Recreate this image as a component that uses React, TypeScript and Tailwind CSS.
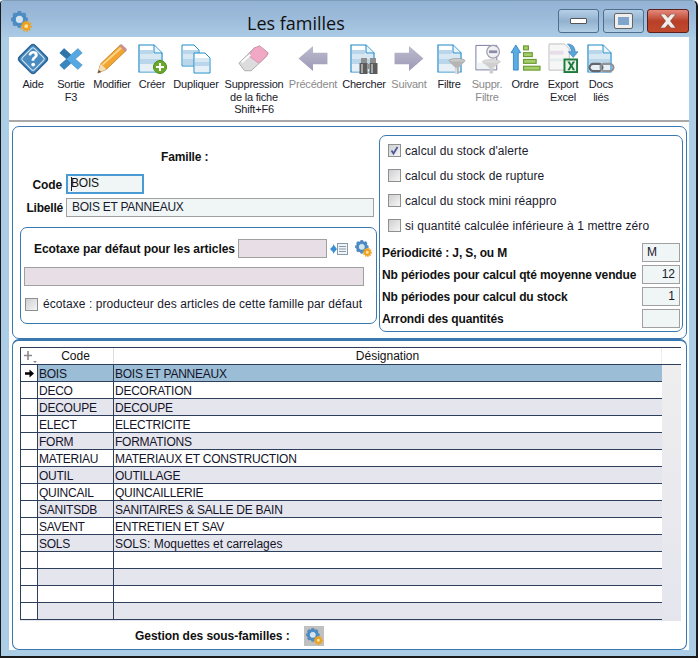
import React from "react";

const rows: [string, string][] = [
  ["BOIS", "BOIS ET PANNEAUX"],
  ["DECO", "DECORATION"],
  ["DECOUPE", "DECOUPE"],
  ["ELECT", "ELECTRICITE"],
  ["FORM", "FORMATIONS"],
  ["MATERIAU", "MATERIAUX ET CONSTRUCTION"],
  ["OUTIL", "OUTILLAGE"],
  ["QUINCAIL", "QUINCAILLERIE"],
  ["SANITSDB", "SANITAIRES & SALLE DE BAIN"],
  ["SAVENT", "ENTRETIEN ET SAV"],
  ["SOLS", "SOLS: Moquettes et carrelages"],
  ["", ""],
  ["", ""],
  ["", ""],
  ["", ""],
];

function Gear({ size = 20 }: { size?: number }) {
  return (
    <svg width={size} height={size} viewBox="0 0 20 20">
      <circle cx="8" cy="8" r="5" fill="#d5e4f1" stroke="#5a9ad0" strokeWidth="3.2" />
      <g fill="#4f90c8" stroke="#3a6ea5" strokeWidth="0.4">
        <circle cx="8" cy="2" r="1.9" />
        <circle cx="8" cy="14" r="1.9" />
        <circle cx="2" cy="8" r="1.9" />
        <circle cx="14" cy="8" r="1.9" />
        <circle cx="3.8" cy="3.8" r="1.9" />
        <circle cx="12.2" cy="3.8" r="1.9" />
        <circle cx="3.8" cy="12.2" r="1.9" />
        <circle cx="12.2" cy="12.2" r="1.9" />
      </g>
      <circle cx="14.5" cy="14.5" r="3" fill="#fbe3a8" stroke="#eda21f" strokeWidth="2.4" />
      <circle cx="14.5" cy="14.5" r="4.8" fill="none" stroke="#eda21f" strokeWidth="1.2" strokeDasharray="1.6 1.3" />
    </svg>
  );
}

function Doc({ children, stroke = "#1d8ac9", w = 24 }: { children?: React.ReactNode; stroke?: string; w?: number }) {
  return (
    <svg width={w + 2} height="29" viewBox={`0 0 ${w + 2} 29`}>
      <path d={`M1 1H${w - 8}L${w} 9V28H1Z`} fill="#fff" stroke={stroke} strokeWidth="1.2" />
      <path d={`M${w - 8} 1V9H${w}`} fill="#eaf3f8" stroke={stroke} strokeWidth="1" />
      <rect x="2" y="6" width={w - 11} height="4" fill="#b9d6ea" />
      <rect x="2" y="10" width={w - 3} height="5" fill="#d8e8f2" />
      <rect x="2" y="15" width={w - 3} height="5" fill="#b9d6ea" />
      <rect x="2" y="20" width={w - 3} height="7.4" fill="#e6f0f6" />
      {children}
    </svg>
  );
}

const icons: Record<string, React.ReactNode> = {
  aide: (
    <svg width="34" height="34" viewBox="0 0 34 34">
      <rect x="6" y="6" width="22" height="22" rx="3" transform="rotate(45 17 17)" fill="#4a8cc0" stroke="#2a6596" strokeWidth="1.5" />
      <rect x="8.5" y="8.5" width="17" height="17" rx="2" transform="rotate(45 17 17)" fill="none" stroke="#d8e8f4" strokeWidth="1" />
      <path d="M12.6 13.2c.4-3 2.4-4.3 4.6-4.3 2.6 0 4.6 1.6 4.6 3.9 0 3.3-3.5 3.1-3.5 6h-2.7c-.1-3.8 3.2-3.8 3.2-5.8 0-1-.7-1.6-1.7-1.6-1.2 0-1.7.8-1.9 2Z" fill="#fff" />
      <circle cx="17.2" cy="22.6" r="1.9" fill="#fff" />
    </svg>
  ),
  sortie: (
    <svg width="26" height="26" viewBox="0 0 30 30">
      <path d="M7 3 15 10 23 3 28 8 20 15 28 22 23 27 15 20 7 27 2 22 10 15 2 8Z" fill="#55a8e2" stroke="#3f86bb" strokeWidth="0.6" />
      <path d="M2 8 7 3 15 10 10 15Z" fill="#2f74a8" />
      <path d="M2 22 7 27 15 20 10 15Z" fill="#3a86bd" />
    </svg>
  ),
  modifier: (
    <svg width="32" height="32" viewBox="0 0 34 34">
      <path d="M2 32 5 22 26 2 32 8 11 28Z" fill="#f2a530" stroke="#b8761a" strokeWidth="0.8" />
      <path d="M7 23 28 4" stroke="#fbd58a" strokeWidth="2" />
      <path d="M25 3 27 1.5 32.5 6.5 31 9Z" fill="#d98a8a" stroke="#999" strokeWidth="0.6" />
      <path d="M2 32 5 22 11 28Z" fill="#f2dfb8" />
      <path d="M2 32 3 28.6 5.4 30.8Z" fill="#444" />
    </svg>
  ),
  creer: (
    <div className="relative w-[29px] h-[30px]">
      <Doc />
      <div className="absolute right-0 bottom-0 w-[14px] h-[14px] rounded-full bg-[#6aa82c] border border-[#4d8a1a] flex items-center justify-center">
        <svg width="10" height="10" viewBox="0 0 10 10"><path d="M4 1H6V4H9V6H6V9H4V6H1V4H4Z" fill="#fff" /></svg>
      </div>
    </div>
  ),
  dupliquer: (
    <svg width="31" height="30" viewBox="0 0 31 30">
      <g stroke="#1d8ac9" strokeWidth="1">
        <path d="M1 1H13L18 6V22H1Z" fill="#fff" />
        <rect x="2" y="6" width="15" height="4" fill="#b9d6ea" stroke="none" />
        <rect x="2" y="10" width="15" height="5" fill="#d8e8f2" stroke="none" />
        <rect x="2" y="15" width="15" height="6" fill="#b9d6ea" stroke="none" />
        <path d="M13 9H24L29 14V29H13Z" fill="#fff" />
        <rect x="14" y="14" width="14" height="4" fill="#d8e8f2" stroke="none" />
        <rect x="14" y="18" width="14" height="4" fill="#b9d6ea" stroke="none" />
        <rect x="14" y="22" width="14" height="6" fill="#e6f0f6" stroke="none" />
      </g>
    </svg>
  ),
  suppression: (
    <svg width="32" height="29" viewBox="0 0 34 30">
      <path d="M1 20 17 4 23 2 32 9 30 13 14 28 7 28Z" fill="#dcdcdc" stroke="#a8a8a8" />
      <path d="M17 4 23 1.5 32 9 30 13 22 20 11 12Z" fill="#f0a8c4" stroke="#c98aa6" strokeWidth="0.7" />
      <path d="M4 19 13 11" stroke="#fff" strokeWidth="2" />
    </svg>
  ),
  prec: (
    <svg width="30" height="27" viewBox="0 0 30 28">
      <defs><linearGradient id="ga" x1="0" y1="0" x2="0" y2="1"><stop offset="0" stopColor="#bcbccd" /><stop offset="1" stopColor="#9d98b8" /></linearGradient></defs>
      <path d="M0 14 15 1V8H30V20H15V27Z" fill="url(#ga)" />
    </svg>
  ),
  chercher: (
    <div className="relative w-[28px] h-[30px]">
      <Doc />
      <svg className="absolute right-0 bottom-0" width="19" height="16" viewBox="0 0 19 16">
        <rect x="2" y="0" width="6" height="5" fill="#8e8e8e" />
        <rect x="11" y="0" width="6" height="5" fill="#8e8e8e" />
        <rect x="0.5" y="5" width="8" height="11" fill="#5c5c5c" />
        <rect x="10.5" y="5" width="8" height="11" fill="#5c5c5c" />
        <rect x="2" y="6" width="2" height="9" fill="#a8a8a8" />
        <rect x="12" y="6" width="2" height="9" fill="#a8a8a8" />
        <rect x="8.5" y="6" width="2" height="5" fill="#8e8e8e" />
      </svg>
    </div>
  ),
  suiv: (
    <svg width="30" height="27" viewBox="0 0 30 28">
      <defs><linearGradient id="gb" x1="0" y1="0" x2="0" y2="1"><stop offset="0" stopColor="#bcbccd" /><stop offset="1" stopColor="#9d98b8" /></linearGradient></defs>
      <path d="M30 14 15 1V8H0V20H15V27Z" fill="url(#gb)" />
    </svg>
  ),
  filtre: (
    <div className="relative w-[29px] h-[30px] ml-[4px]">
      <Doc />
      <svg className="absolute right-0 bottom-0" width="18" height="16" viewBox="0 0 20 18">
        <ellipse cx="10" cy="3" rx="9" ry="2.5" fill="#c9c9c9" stroke="#888" strokeWidth="0.6" />
        <path d="M1 4 8 11V18H12V11L19 4Z" fill="#b5b5b5" />
        <path d="M8 11H10V18H8Z" fill="#dedede" />
      </svg>
    </div>
  ),
  suppr: (
    <svg className="ml-[4px]" width="29" height="30" viewBox="0 0 32 32">
      <path d="M1 1H24V28H1Z" fill="#fff" stroke="#6f6f9f" />
      <rect x="2" y="20" width="21" height="7" fill="#eef4f4" />
      <ellipse cx="18" cy="19" rx="10" ry="2.4" fill="#dcdcdc" stroke="#aaa" strokeWidth="0.5" />
      <path d="M9 20 16 26V32H20V26L27 20Z" fill="#cfcfcf" />
      <circle cx="20" cy="8" r="7" fill="#f0f0f4" stroke="#a0a0b0" strokeWidth="1.4" />
      <rect x="15.5" y="6.5" width="9" height="3" fill="#8c8ca4" />
    </svg>
  ),
  ordre: (
    <svg width="31" height="29" viewBox="0 0 32 30">
      <path d="M6 1 11 9H8.5V27H3.5V9H1Z" fill="#59ace4" stroke="#2a78b8" strokeWidth="0.8" />
      <g fill="#a5cf6b" stroke="#6d9a33" strokeWidth="1.2">
        <rect x="14" y="2" width="5" height="4" />
        <rect x="14" y="9" width="9" height="4" />
        <rect x="14" y="16" width="13" height="4" />
        <rect x="14" y="23" width="17" height="4" />
      </g>
    </svg>
  ),
  excel: (
    <svg width="31" height="31" viewBox="0 0 32 32">
      <path d="M1 1H17L22 6V28H1Z" fill="#f6f6f6" stroke="#c0c0c0" />
      <rect x="2" y="8" width="14" height="4" fill="#e6dde8" />
      <rect x="2" y="16" width="14" height="3" fill="#e2eeee" />
      <path d="M20 1C25 1 28 4 28 9H31L26 15 21 9H24C24 6 23 4 20 1Z" fill="#5aa5d8" stroke="#2a78b8" strokeWidth="0.6" />
      <rect x="16" y="16" width="15" height="15" fill="#1f7a3d" />
      <rect x="18" y="18" width="11" height="11" fill="#e9f4e9" />
      <path d="M20 19H22.5L24 22 25.5 19H28L25.3 23.5 28 28H25.5L24 25 22.5 28H20L22.7 23.5Z" fill="#1f7a3d" />
    </svg>
  ),
  docs: (
    <div className="relative w-[28px] h-[30px]">
      <Doc />
      <svg className="absolute right-0 bottom-[1px]" width="27" height="11" viewBox="0 0 28 12">
        <rect x="1" y="2" width="14" height="8" rx="4" fill="none" stroke="#63676c" strokeWidth="2.4" />
        <rect x="13" y="2" width="14" height="8" rx="4" fill="none" stroke="#8f9398" strokeWidth="2.4" />
      </svg>
    </div>
  ),
};

const tools = [
  { k: "aide", lines: ["Aide"], w: "w-[34px]", ml: "ml-[7px]", d: false },
  { k: "sortie", lines: ["Sortie", "F3"], w: "w-[38px]", ml: "ml-[2px]", d: false },
  { k: "modifier", lines: ["Modifier"], w: "w-[42px]", ml: "ml-[1px]", d: false },
  { k: "creer", lines: ["Créer"], w: "w-[36px]", ml: "ml-[1px]", d: false },
  { k: "dupliquer", lines: ["Dupliquer"], w: "w-[50px]", ml: "ml-[1px]", d: false },
  { k: "suppression", lines: ["Suppression", "de la fiche", "Shift+F6"], w: "w-[60px]", ml: "ml-[3px]", d: false },
  { k: "prec", lines: ["Précédent"], w: "w-[50px]", ml: "ml-[4px]", d: true },
  { k: "chercher", lines: ["Chercher"], w: "w-[44px]", ml: "ml-[4px]", d: false },
  { k: "suiv", lines: ["Suivant"], w: "w-[40px]", ml: "ml-[3px]", d: true },
  { k: "filtre", lines: ["Filtre"], w: "w-[30px]", ml: "ml-[5px]", d: false },
  { k: "suppr", lines: ["Suppr.", "Filtre"], w: "w-[34px]", ml: "ml-[6px]", d: true },
  { k: "ordre", lines: ["Ordre"], w: "w-[30px]", ml: "ml-[6px]", d: false },
  { k: "excel", lines: ["Export", "Excel"], w: "w-[34px]", ml: "ml-[6px]", d: false },
  { k: "docs", lines: ["Docs", "liés"], w: "w-[30px]", ml: "ml-[6px]", d: false },
];

function Check({ checked = false }: { checked?: boolean }) {
  return (
    <span className="relative w-[13px] h-[13px] shrink-0 border border-[#8e8f8f] bg-gradient-to-br from-[#cfcfd2] to-[#f6f6f6] block">
      {checked && (
        <svg className="absolute left-0 top-0" width="11" height="11" viewBox="0 0 11 11">
          <path d="M2.5 5.5 4.5 8.5 8.5 2" fill="none" stroke="#4a5a9a" strokeWidth="1.8" />
        </svg>
      )}
    </span>
  );
}

const field = "h-[19px] bg-[#eff6f5] border border-[#a0a0a0] text-[12px] leading-[16px] text-[#1a1a2e]";

export default function App() {
  return (
    <div className="w-[700px] h-[662px] bg-white font-['Liberation_Sans',Arial,sans-serif] text-[12px] text-[#111]">
      <div className="w-[698px] h-[658px] bg-[#accde6] border-r-2 border-b-2 border-l border-[#1a1a1a] border-t border-t-[#7f9db9] rounded-tr-[6px] rounded-tl-[4px] flex flex-col overflow-hidden">
        <div className="h-[36px] shrink-0 flex items-start relative bg-gradient-to-b from-[#93b3d5] via-[#9dbcdb] to-[#aacbe5]">
          <div className="ml-[10px] mt-[10px]"><Gear size={21} /></div>
          <div className="absolute left-[246px] top-[12px] font-['Open_Sans',sans-serif] text-[18px] leading-[20px] text-[#111]">Les familles</div>
          <div className="ml-auto mr-[7px] mt-[8px] flex">
            <div className="w-[41px] h-[24px] rounded-[3px] border border-[#4f6d8c] bg-gradient-to-b from-[#b5cfe6] via-[#92b1cf] to-[#b3cfe6] flex items-center justify-center">
              <div className="w-[17px] h-[6px] bg-white border border-[#555] rounded-[1px]" />
            </div>
            <div className="ml-[4px] w-[41px] h-[24px] rounded-[3px] border border-[#4f6d8c] bg-gradient-to-b from-[#b5cfe6] via-[#92b1cf] to-[#b3cfe6] flex items-center justify-center">
              <div className="w-[17px] h-[14px] bg-[#7fa5cc] border-[3px] border-[#eeeeee] outline outline-1 outline-[#666] rounded-[1px]" />
            </div>
            <div className="ml-[3px] w-[42px] h-[24px] rounded-[3px] border border-[#5c1f1a] bg-gradient-to-b from-[#e4897c] via-[#b93f27] to-[#c04a2c] flex items-center justify-center">
              <svg width="18" height="14" viewBox="0 0 18 14"><path d="M1 0H6L9 3.5 12 0H17L11.5 7 17 14H12L9 10.5 6 14H1L6.5 7Z" fill="#f2ede8" stroke="#6b3a30" strokeWidth="0.6" /></svg>
            </div>
          </div>
        </div>

        <div className="flex-1 flex flex-col ml-[8px] mr-[7px] mb-[6px] bg-white relative">
          <div className="h-[85px] shrink-0 border-b-2 border-[#a8a8a8] flex items-start">
            {tools.map((t) => (
              <div key={t.k} className={`${t.ml} ${t.w} shrink-0 flex flex-col items-center`}>
                <div className="h-[35px] mt-[4px] flex items-center justify-center">{icons[t.k]}</div>
                <div className={`mt-[2px] text-center text-[11px] leading-[12.6px] whitespace-nowrap tracking-[-0.2px] ${t.d ? "text-[#8a8a8a]" : "text-[#1a1a2a]"}`}>
                  {t.lines.map((l) => <div key={l}>{l}</div>)}
                </div>
              </div>
            ))}
          </div>

          <div className="ml-[3px] mr-[2px] mt-[4px] h-[213px] shrink-0 border border-[#3a78b0] rounded-[7px] flex">
            <div className="w-[366px] shrink-0 pt-[23px] flex flex-col">
              <div className="font-bold text-[12px] leading-[14px] pl-[148px] tracking-[-0.15px]">Famille :</div>
              <div className="mt-[10px] flex items-center h-[19px]">
                <span className="w-[49px] text-right font-bold text-[12px] pt-[3px] tracking-[-0.1px]">Code</span>
                <div className="ml-[4px] w-[78px] h-[20px] border-2 border-[#4a9ad4] bg-[#eff6f5] text-[12px] leading-[15px] flex">
                  <span className="w-[1px] bg-[#222] my-[1px] ml-[3px]" />
                  <span className="ml-[-1px] tracking-[-0.2px]">BOIS</span>
                </div>
              </div>
              <div className="mt-[5px] flex items-center">
                <span className="w-[50px] text-right font-bold text-[12px] tracking-[-0.2px]">Libellé</span>
                <div className={`${field} ml-[3px] w-[308px] pl-[5px] tracking-[-0.25px]`}>BOIS ET PANNEAUX</div>
              </div>
              <div className="mt-[10px] ml-[7px] w-[357px] h-[97px] border border-[#3a78b0] rounded-[7px] pl-[3px] pt-[11px]">
                <div className="flex items-center">
                  <span className="ml-[10px] w-[204px] font-bold text-[12px] leading-[14px] whitespace-nowrap tracking-[-0.05px]">Ecotaxe par défaut pour les articles</span>
                  <div className="w-[89px] h-[19px] bg-[#e8dee6] border border-[#a0a0a0]" />
                  <svg className="ml-[3px]" width="18" height="14" viewBox="0 0 18 14">
                    <path d="M0 7 3 4V2L7 7 3 12V10Z" fill="#3b8fd0" />
                    <rect x="7.5" y="1.5" width="10" height="11" fill="#eef4f8" stroke="#8a9aa8" />
                    <path d="M9 4.5H16M9 7H16M9 9.5H16" stroke="#8a9aa8" />
                  </svg>
                  <span className="ml-[7px]"><Gear size={17} /></span>
                </div>
                <div className="mt-[9px] w-[340px] h-[19px] bg-[#e8dee6] border border-[#a0a0a0]" />
                <div className="mt-[11px] flex items-center gap-[5px] ml-[1px]">
                  <Check />
                  <span className="text-[12px] leading-[14px] whitespace-nowrap tracking-[0.07px] text-[#1a1a2e]">écotaxe : producteur des articles de cette famille par défaut</span>
                </div>
              </div>
            </div>
            <div className="ml-auto mr-[3px] mt-[8px] w-[305px] h-[197px] border border-[#3a78b0] rounded-[7px] pt-[2px] pl-[2px] pr-[2px]">
              {["calcul du stock d'alerte", "calcul du stock de rupture", "calcul du stock mini réappro", "si quantité calculée inférieure à 1 mettre zéro"].map((t, i) => (
                <div key={t} className="h-[25px] flex items-center gap-[4px] pl-[6px]">
                  <Check checked={i === 0} />
                  <span className="text-[12px] whitespace-nowrap tracking-[0.1px] text-[#1a1a2e]">{t}</span>
                </div>
              ))}
              <div className="mt-[5px] flex flex-col gap-[3px]">
                {[["Périodicité : J, S, ou M", "M", "left"], ["Nb périodes pour calcul qté moyenne vendue", "12", "right"], ["Nb périodes pour calcul du stock", "1", "right"], ["Arrondi des quantités", "", "right"]].map(([l, v, a]) => (
                  <div key={l} className="flex items-center justify-between">
                    <span className="font-bold text-[12px] whitespace-nowrap tracking-[-0.12px]">{l}</span>
                    <div className={`${field} w-[38px] px-[4px] ${a === "right" ? "text-right" : "text-left"}`}>{v}</div>
                  </div>
                ))}
              </div>
            </div>
          </div>

          <div className="ml-[3px] mr-[2px] flex-1 border border-[#3a78b0] border-t-2 border-t-[#3a78b0] rounded-[7px] pt-[6px] pl-[7px] pr-[6px]">
            <div className="relative bg-gradient-to-b from-[#efefef] to-[#e5e5ee] h-[274px] w-[661px]">
              <div className="flex h-[18px] w-[661px] bg-white border-t border-l border-b border-[#2e3f5c]">
                <div className="w-[17px] shrink-0 relative">
                  <svg className="absolute left-[2px] top-[3px]" width="14" height="12" viewBox="0 0 14 12">
                    <path d="M5 0V9M1 4.5H9" stroke="#8a8a8a" strokeWidth="1.6" />
                    <path d="M10 10H14L12 12Z" fill="#8a8a8a" />
                  </svg>
                </div>
                <div className="w-[76px] shrink-0 text-center text-[12px] leading-[16px] border-r border-[#dddddd]">Code</div>
                <div className="w-[548px] shrink-0 text-center text-[12px] leading-[16px] border-r border-[#eeeeee]">Désignation</div>
              </div>
              <div className="w-[642px]">
                {rows.map((r, i) => (
                  <div key={i} className={`flex h-[17px] border-b border-l border-[#2e3f5c] ${i === 0 ? "bg-[#9bbdd6]" : i % 2 === 0 ? "bg-[#e5e5ee]" : "bg-white"}`}>
                    <div className="w-[17px] shrink-0 border-r border-[#2e3f5c] bg-white flex items-center justify-center">
                      {i === 0 && (
                        <svg width="9" height="9" viewBox="0 0 9 9"><path d="M0 3.2H4.5V0.5L9 4.5 4.5 8.5V5.8H0Z" fill="#000" /></svg>
                      )}
                    </div>
                    <div className="w-[76px] shrink-0 border-r border-[#2e3f5c] pl-[1px] text-[12px] leading-[18px] text-[#141428] tracking-[-0.24px]">{r[0]}</div>
                    <div className={`flex-1 pl-[1px] text-[12px] leading-[18px] text-[#141428] ${i === 10 ? "" : "tracking-[-0.24px]"}`}>{r[1]}</div>
                  </div>
                ))}
              </div>
            </div>
            <div className="mt-[5px] flex items-center">
              <span className="ml-[115px] w-[169px] font-bold text-[12px] whitespace-nowrap tracking-[-0.05px]">Gestion des sous-familles :</span>
              <div className="w-[20px] h-[20px] bg-[#c0c0c0] flex items-center justify-center"><Gear size={17} /></div>
            </div>
          </div>
        </div>
      </div>
    </div>
  );
}
